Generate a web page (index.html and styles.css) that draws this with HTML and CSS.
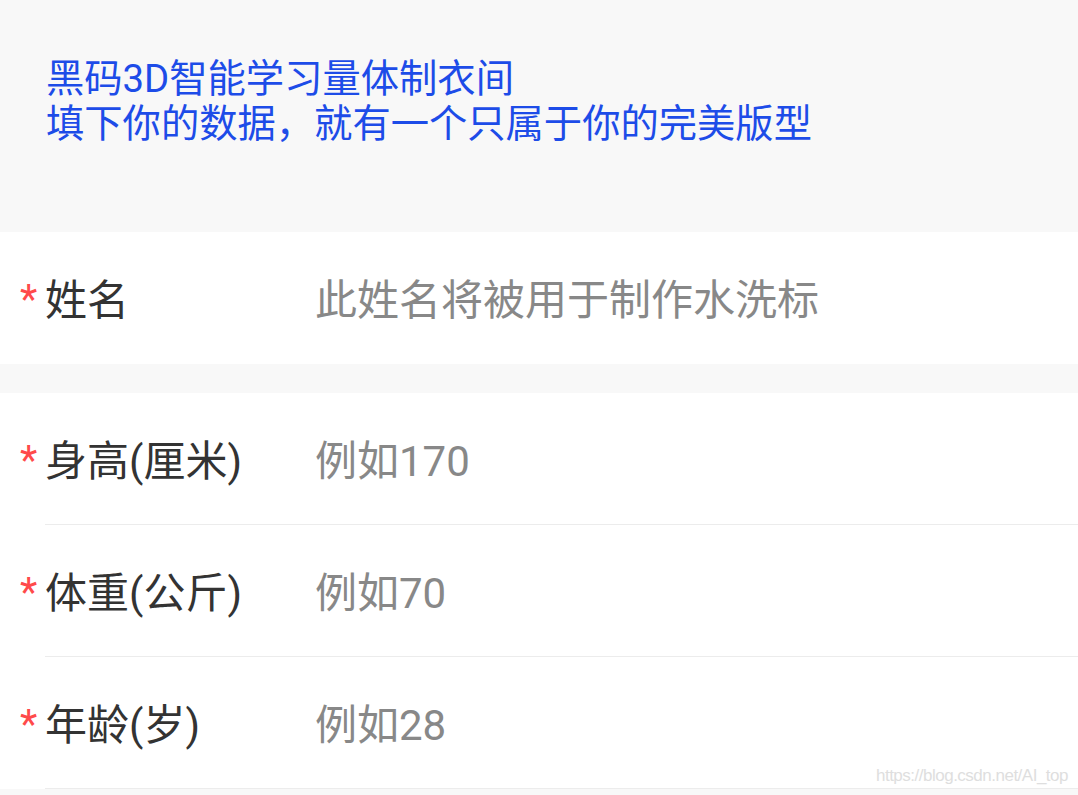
FILE: index.html
```html
<!DOCTYPE html>
<html lang="zh-CN">
<head>
    <meta charset="UTF-8">
    <meta name="viewport" content="width=device-width, initial-scale=1.0">
    <title>黑码3D智能学习量体制衣间</title>
    <link rel="stylesheet" href="styles.css">
</head>
<body>
    <div class="header">
        <p>黑码3D智能学习量体制衣间</p>
        <p>填下你的数据，就有一个只属于你的完美版型</p>
    </div>

    <div class="group">
        <div class="field">
            <span class="req">*</span>
            <div class="body">
                <span class="label">姓名</span>
                <span class="value">此姓名将被用于制作水洗标</span>
            </div>
        </div>
    </div>

    <div class="group lined">
        <div class="field">
            <span class="req">*</span>
            <div class="body">
                <span class="label">身高(厘米)</span>
                <span class="value">例如170</span>
            </div>
        </div>
        <div class="field">
            <span class="req">*</span>
            <div class="body">
                <span class="label">体重(公斤)</span>
                <span class="value">例如70</span>
            </div>
        </div>
        <div class="field">
            <span class="req">*</span>
            <div class="body">
                <span class="label">年龄(岁)</span>
                <span class="value">例如28</span>
            </div>
        </div>
    </div>

    <div class="watermark">https://blog.csdn.net/AI_top</div>
</body>
</html>
```

FILE: styles.css
```css
body {
    margin: 0;
    background: #f8f8f8;
    font-family: Roboto, "Noto Sans CJK SC", sans-serif;
    position: relative;
    min-height: 795px;
}
.header {
    height: 232px;
    box-sizing: border-box;
    padding: 56px 0 0 46px;
    color: #1d4ce8;
    font-size: 38.3px;
    line-height: 45px;
}
.header p {
    margin: 0;
}
.group {
    background: #fff;
    margin-bottom: 29px;
}
.field {
    display: flex;
    height: 132px;
    font-size: 42px;
}
.req {
    width: 25px;
    padding-left: 20px;
    padding-top: 2px;
    color: #ff4a4a;
    font-size: 40px;
    display: flex;
    align-items: center;
}
.body {
    flex: 1;
    display: flex;
    align-items: center;
    padding-bottom: 4px;
}
.lined .body {
    border-bottom: 1px solid #ececec;
    padding-bottom: 3px;
}
.label {
    width: 270px;
    color: #333;
}
.value {
    color: #888;
}
.watermark {
    position: absolute;
    right: 10px;
    top: 766px;
    font-family: "Liberation Sans", Arial, sans-serif;
    font-size: 17px;
    color: #dedede;
    letter-spacing: -0.5px;
}
```
